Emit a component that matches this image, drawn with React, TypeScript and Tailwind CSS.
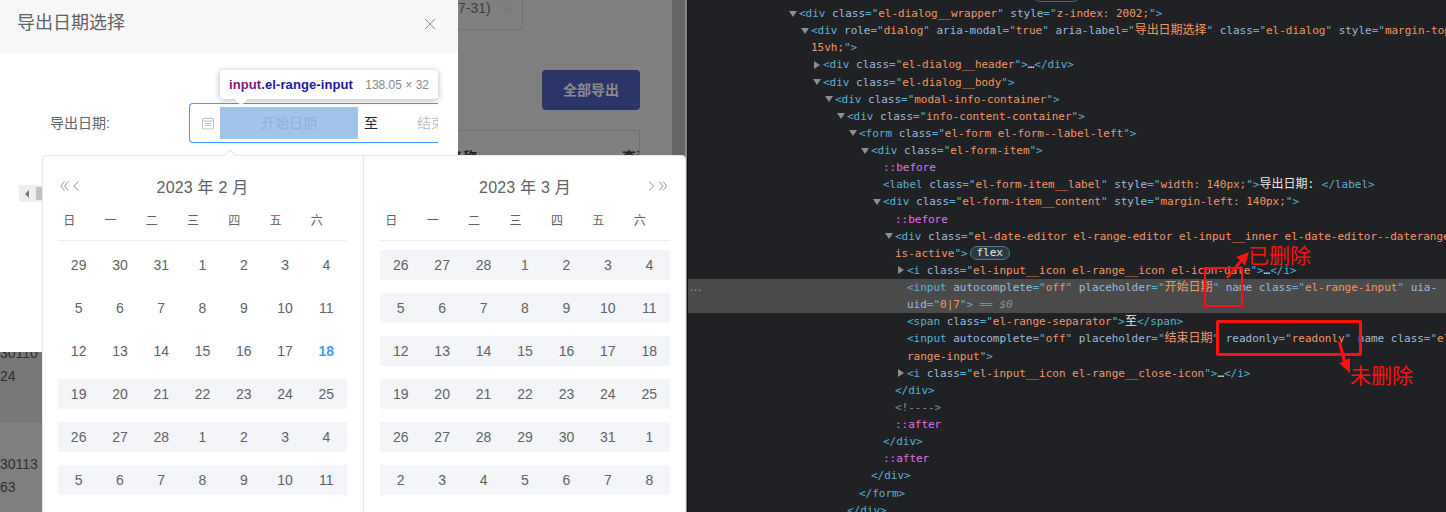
type Kind = "t" | "a" | "v" | "p" | "w" | "g" | "c" | "b" | "i";
type Line = { x: number; arrow?: "down" | "right"; parts: [Kind, string][]; hl?: boolean };

const kindClass: Record<Kind, string> = {
  t: "text-[#5db0d7]",
  a: "text-[#9bbbdc]",
  v: "text-[#f29766]",
  p: "text-[#e36eec]",
  w: "text-[#e8eaed]",
  g: "text-[#8b8d91]",
  c: "text-[#f29766] text-[12px]",
  b: "text-[#e8eaed] text-[12px]",
  i: "text-[#8b8d91] italic",
};

const open = (tag: string): [Kind, string] => ["t", "<" + tag];
const attr = (name: string, value: string): [Kind, string][] => [
  ["t", " "],
  ["a", name],
  ["t", '="'],
  ["v", value],
  ["t", '"'],
];
const close: [Kind, string] = ["t", ">"];

const lines: Line[] = [
  { x: 799, arrow: "down", parts: [open("div"), ...attr("class", "el-dialog__wrapper"), ...attr("style", "z-index: 2002;"), close] },
  {
    x: 811,
    arrow: "down",
    parts: [
      open("div"),
      ...attr("role", "dialog"),
      ...attr("aria-modal", "true"),
      ["t", " "],
      ["a", "aria-label"],
      ["t", '="'],
      ["c", "导出日期选择"],
      ["t", '"'],
      ...attr("class", "el-dialog"),
      ["t", " "],
      ["a", "style"],
      ["t", '="'],
      ["v", "margin-top:"],
    ],
  },
  { x: 811, parts: [["v", "15vh;"], ["t", '">']] },
  { x: 823, arrow: "right", parts: [open("div"), ...attr("class", "el-dialog__header"), close, ["w", "…"], ["t", "</div>"]] },
  { x: 823, arrow: "down", parts: [open("div"), ...attr("class", "el-dialog__body"), close] },
  { x: 835, arrow: "down", parts: [open("div"), ...attr("class", "modal-info-container"), close] },
  { x: 847, arrow: "down", parts: [open("div"), ...attr("class", "info-content-container"), close] },
  { x: 859, arrow: "down", parts: [open("form"), ...attr("class", "el-form el-form--label-left"), close] },
  { x: 871, arrow: "down", parts: [open("div"), ...attr("class", "el-form-item"), close] },
  { x: 883, parts: [["p", "::before"]] },
  {
    x: 883,
    parts: [open("label"), ...attr("class", "el-form-item__label"), ...attr("style", "width: 140px;"), close, ["b", "导出日期: "], ["t", "</label>"]],
  },
  { x: 883, arrow: "down", parts: [open("div"), ...attr("class", "el-form-item__content"), ...attr("style", "margin-left: 140px;"), close] },
  { x: 895, parts: [["p", "::before"]] },
  { x: 895, arrow: "down", parts: [open("div"), ["t", " "], ["a", "class"], ["t", '="'], ["v", "el-date-editor el-range-editor el-input__inner el-date-editor--daterange"]] },
  { x: 895, parts: [["v", "is-active"], ["t", '">']] },
  { x: 907, arrow: "right", parts: [open("i"), ...attr("class", "el-input__icon el-range__icon el-icon-date"), close, ["w", "…"], ["t", "</i>"]] },
  {
    x: 907,
    hl: true,
    parts: [
      open("input"),
      ...attr("autocomplete", "off"),
      ["t", " "],
      ["a", "placeholder"],
      ["t", '="'],
      ["c", "开始日期"],
      ["t", '"'],
      ["t", " "],
      ["a", "name"],
      ...attr("class", "el-range-input"),
      ["t", " "],
      ["a", "uia-"],
    ],
  },
  { x: 907, hl: true, parts: [["a", "uid"], ["t", '="'], ["v", "0|7"], ["t", '">'], ["g", " == "], ["i", "$0"]] },
  { x: 907, parts: [open("span"), ...attr("class", "el-range-separator"), close, ["b", "至"], ["t", "</span>"]] },
  {
    x: 907,
    parts: [
      open("input"),
      ...attr("autocomplete", "off"),
      ["t", " "],
      ["a", "placeholder"],
      ["t", '="'],
      ["c", "结束日期"],
      ["t", '"'],
      ...attr("readonly", "readonly"),
      ["t", " "],
      ["a", "name"],
      ["t", " "],
      ["a", "class"],
      ["t", '="'],
      ["v", "el-"],
    ],
  },
  { x: 907, parts: [["v", "range-input"], ["t", '">']] },
  { x: 907, arrow: "right", parts: [open("i"), ...attr("class", "el-input__icon el-range__close-icon"), close, ["w", "…"], ["t", "</i>"]] },
  { x: 895, parts: [["t", "</div>"]] },
  { x: 895, parts: [["g", "<!---->"]] },
  { x: 895, parts: [["p", "::after"]] },
  { x: 883, parts: [["t", "</div>"]] },
  { x: 883, parts: [["p", "::after"]] },
  { x: 871, parts: [["t", "</div>"]] },
  { x: 859, parts: [["t", "</form>"]] },
  { x: 847, parts: [["t", "</div>"]] },
];

const weekdays = ["日", "一", "二", "三", "四", "五", "六"];

const febWeeks = [
  [29, 30, 31, 1, 2, 3, 4],
  [5, 6, 7, 8, 9, 10, 11],
  [12, 13, 14, 15, 16, 17, 18],
  [19, 20, 21, 22, 23, 24, 25],
  [26, 27, 28, 1, 2, 3, 4],
  [5, 6, 7, 8, 9, 10, 11],
];

const marWeeks = [
  [26, 27, 28, 1, 2, 3, 4],
  [5, 6, 7, 8, 9, 10, 11],
  [12, 13, 14, 15, 16, 17, 18],
  [19, 20, 21, 22, 23, 24, 25],
  [26, 27, 28, 29, 30, 31, 1],
  [2, 3, 4, 5, 6, 7, 8],
];

function CalendarPanel({
  title,
  weeks,
  firstShaded,
  today,
  nav,
}: {
  title: string;
  weeks: number[][];
  firstShaded: number;
  today?: boolean;
  nav: "left" | "right";
}) {
  return (
    <div className="h-full pt-[19px]">
      <div className="grid h-[26px] grid-cols-[1fr_auto_1fr]">
        <div className="pl-[2px] pt-[6px]">
          {nav === "left" && (
            <svg className="h-[10px] w-[20px]" viewBox="0 0 20 10" fill="none" stroke="#909399" strokeWidth="1">
              <path d="M4.500 .5 .8 5 4.500 9.500M8.300 .5 4.600 5 8.300 9.500M18.500 .5 13.800 5 18.500 9.500" />
            </svg>
          )}
        </div>
        <div className="text-center text-[16px] leading-[26px] tracking-[0.2px] text-[#606266]">{title}</div>
        <div className="flex justify-end pr-[2px] pt-[6px]">
          {nav === "right" && (
            <svg className="h-[10px] w-[20px]" viewBox="0 0 20 10" fill="none" stroke="#909399" strokeWidth="1">
              <path d="M1 .5 5.700 5 1 9.500M11.200 .5 14.900 5 11.200 9.500M15 .5 18.700 5 15 9.500" />
            </svg>
          )}
        </div>
      </div>
      <div className="mt-[6px] grid h-[34px] grid-cols-7 border-b border-[#ebeef5] text-[12px] leading-[28px] text-[#606266]">
        {weekdays.map((d) => (
          <div key={d} className="pr-[19px] text-center">
            {d}
          </div>
        ))}
      </div>
      <div className="mt-[9px] flex flex-col gap-[13px]">
        {weeks.map((week, i) => (
          <div key={i} className={`grid h-[30px] grid-cols-7 ${i >= firstShaded ? "bg-[#f4f5f9]" : ""}`}>
            {week.map((n, j) => {
              const isToday = today && n === 18 && i === 2;
              return (
                <div
                  key={j}
                  className={`text-center text-[14px] leading-[30px] ${isToday ? "font-bold text-[#409eff]" : "text-[#606266]"}`}
                >
                  {n}
                </div>
              );
            })}
          </div>
        ))}
      </div>
    </div>
  );
}

function DevTools() {
  return (
    <div className="relative h-full flex-1 overflow-hidden border-l border-[#111214] bg-[#202124] pt-[5px] font-['DejaVu_Sans_Mono','Noto_Sans_CJK_SC',monospace] text-[11px] tracking-[-0.02px]">
      <div className="absolute left-[345px] top-[-12px] h-[14px] w-[47px] rounded-full border border-[#3f6a80]" />
      {lines.map((line, i) => (
        <div
          key={i}
          className={`relative flex h-[17.14px] items-center whitespace-pre leading-[17.14px] ${line.hl ? "bg-[#4a4a4a]" : ""}`}
          style={{ paddingLeft: line.x - 698 }}
        >
          <div className="w-[10px] shrink-0">
            {line.arrow === "down" && (
              <div className="h-0 w-0 border-x-[4px] border-t-[6px] border-x-transparent border-t-[#8d8f92]" />
            )}
            {line.arrow === "right" && (
              <div className="ml-[1px] h-0 w-0 border-y-[4px] border-l-[6px] border-y-transparent border-l-[#8d8f92]" />
            )}
          </div>
          <div>
            {line.parts.map(([kind, text], j) => (
              <span key={j} className={kindClass[kind]}>
                {text}
              </span>
            ))}
          </div>
          {i === 14 && (
            <span className="ml-[2px] h-[14px] w-[40px] rounded-full border border-[#4d7b92] bg-[#2a3a44] text-center text-[11px] leading-[12px] text-[#e8eaed]">
              flex
            </span>
          )}
          {i === 16 && (
            <span className="absolute left-[2px] top-0 font-['Liberation_Sans',sans-serif] text-[11px] font-bold tracking-[1px] text-[#7d7f83]">
              ...
            </span>
          )}
        </div>
      ))}

      {/* red markup drawn over the code */}
      <div className="absolute left-[516px] top-[267px] h-[40px] w-[39px] border-2 border-[#f11]" />
      <div className="absolute left-[528px] top-[320px] h-[36px] w-[146px] rounded-[2px] border-[3px] border-[#f11]" />
      <svg className="pointer-events-none absolute left-0 top-0 h-[512px] w-[758px]" viewBox="0 0 758 512" fill="#f11">
        <path d="M538 277 552 260 548 257 561 252 557 266 554 262 540 279Z" />
        <path d="M650 342 653 342 658 360 662 358 662 373 651 363 655 362Z" />
      </svg>
      <span className="absolute left-[560px] top-[240px] font-['Noto_Sans_CJK_SC',sans-serif] text-[21px] leading-[28px] text-[#f11]">
        已删除
      </span>
      <span className="absolute left-[662px] top-[360px] font-['Noto_Sans_CJK_SC',sans-serif] text-[21px] leading-[28px] text-[#f11]">
        未删除
      </span>
    </div>
  );
}

export default function App() {
  return (
    <div className="flex h-[512px] w-[1446px] overflow-hidden bg-[#202124] font-['Liberation_Sans','Noto_Sans_CJK_SC',sans-serif]">
      <div className="relative flex h-full w-[687px] shrink-0 overflow-hidden bg-[#7f7f7f]">
        {/* dialog and the table rows showing below it */}
        <div className="flex w-[458px] shrink-0 flex-col">
          <div className="relative z-10 h-[352px] bg-white">
            <div className="flex h-[53px] items-center justify-between bg-[#f7f7f7] pb-[6px] pl-[17px] pr-[22px]">
              <span className="text-[18px] text-[#606266]">导出日期选择</span>
              <svg className="mt-[1px] h-[12px] w-[12px]" viewBox="0 0 12 12" stroke="#909399" strokeWidth="1">
                <path d="M1 1 11 11M11 1 1 11" />
              </svg>
            </div>
            <div className="flex items-center pl-[50px] pt-[50px]">
              <label className="w-[139px] text-[14px] text-[#606266]">导出日期:</label>
              <div className="flex h-[40px] w-[249px] items-center overflow-hidden rounded-l-[4px] border-y border-l border-[#409eff] pl-[11px]">
                <svg className="h-[14px] w-[14px] shrink-0" viewBox="0 0 14 14" fill="none" stroke="#c0c4cc" strokeWidth="1">
                  <path d="M1.500 2.500h11v10.500h-11zM1.500 5h11M4 1v2M10 1v2M4 7.500h6M4 9.500h6" />
                </svg>
                <div className="ml-[5px] flex h-[32px] w-[138px] shrink-0 items-center justify-center bg-[#a0c5e8] text-[14px] text-[#8fb2d6]">
                  开始日期
                </div>
                <span className="ml-[6px] shrink-0 text-[14px] text-[#222]">至</span>
                <span className="ml-[39px] shrink-0 text-[14px] text-[#c0c4cc]">结束日期</span>
              </div>
            </div>
            <div className="ml-[19px] mt-[42px] flex h-[17px] w-[200px] items-center bg-[#eeeeee] pl-[6px]">
              <div className="h-0 w-0 border-y-[4px] border-r-[4px] border-y-transparent border-r-[#777]" />
              <div className="ml-[7px] h-[13px] w-[6px] bg-[#c1c1c1]" />
            </div>
          </div>
          <div className="h-[71px] bg-[#787878] text-[14px] leading-[23px] text-[#2a2f3a]">
            <div className="-mt-[10px]">30110</div>
            <div>24</div>
          </div>
          <div className="flex-1 pt-[30px] text-[14px] leading-[23px] text-[#2a2f3a]">
            <div>30113</div>
            <div>63</div>
          </div>
        </div>

        {/* dimmed page right of the dialog */}
        <div className="flex w-[214px] shrink-0 flex-col">
          <div className="flex h-[30px] w-[65px] items-start gap-[10px] rounded-br-[4px] border-b border-r border-[#6e7073] text-[14px] leading-[17px] text-[#3d3d3d]">
            <span>7-31)</span>
            <svg className="mt-[4px] h-[10px] w-[12px] shrink-0" viewBox="0 0 12 10" fill="none" stroke="#6a6a6a" strokeWidth="1">
              <path d="M1 2.500 6 7.500 11 2.500" />
            </svg>
          </div>
          <div className="mr-[32px] mt-[40px] flex h-[40px] w-[98px] items-center justify-center self-end rounded-[4px] bg-[#2c3568] text-[14px] font-bold text-[#8b8b8b]">
            全部导出
          </div>
          <div className="mr-[32px] mt-[20px] flex flex-1 items-start justify-between overflow-hidden border-r border-t border-[#6e7073] pt-[16px] text-[14px] font-bold text-[#222]">
            <span className="-ml-[9px] whitespace-nowrap">名称</span>
            <span className="-mr-[11px] whitespace-nowrap">查询</span>
          </div>
        </div>
        <div className="h-full w-[13px] shrink-0 bg-[#666666]" />
        <div className="h-full flex-1 bg-[#8c8c8c]" />

        {/* element highlight tooltip */}
        <div className="absolute left-[220px] top-[70px] z-20 flex h-[29px] w-[218px] items-center justify-between rounded-[3px] bg-white px-[9px] text-[12px] shadow-[0_1px_6px_rgba(0,0,0,0.3)]">
          <span className="text-[13px] font-bold tracking-[0.1px]">
            <span className="text-[#881280]">input</span>
            <span className="text-[#1a1aa6]">.el-range-input</span>
          </span>
          <span className="text-[#888]">138.05 × 32</span>
          <div className="absolute left-[15px] top-[29px] h-0 w-0 border-x-[6px] border-t-[7px] border-x-transparent border-t-white" />
        </div>

        {/* date range popover */}
        <div className="absolute left-[42px] top-[155px] z-20 flex h-[380px] w-[644px] rounded-[4px] border border-[#e4e7ed] bg-white">
          <div className="absolute left-[183px] top-[-5px] h-[8px] w-[8px] rotate-45 border-l border-t border-[#e4e7ed] bg-white" />
          <div className="relative h-full w-[321px] border-r border-[#e4e4e4] pl-[15px] pr-[16px]">
            <CalendarPanel title="2023 年 2 月" weeks={febWeeks} firstShaded={3} today nav="left" />
          </div>
          <div className="relative h-full flex-1 pl-[16px] pr-[15px]">
            <CalendarPanel title="2023 年 3 月" weeks={marWeeks} firstShaded={0} nav="right" />
          </div>
        </div>
      </div>
      <DevTools />
    </div>
  );
}
